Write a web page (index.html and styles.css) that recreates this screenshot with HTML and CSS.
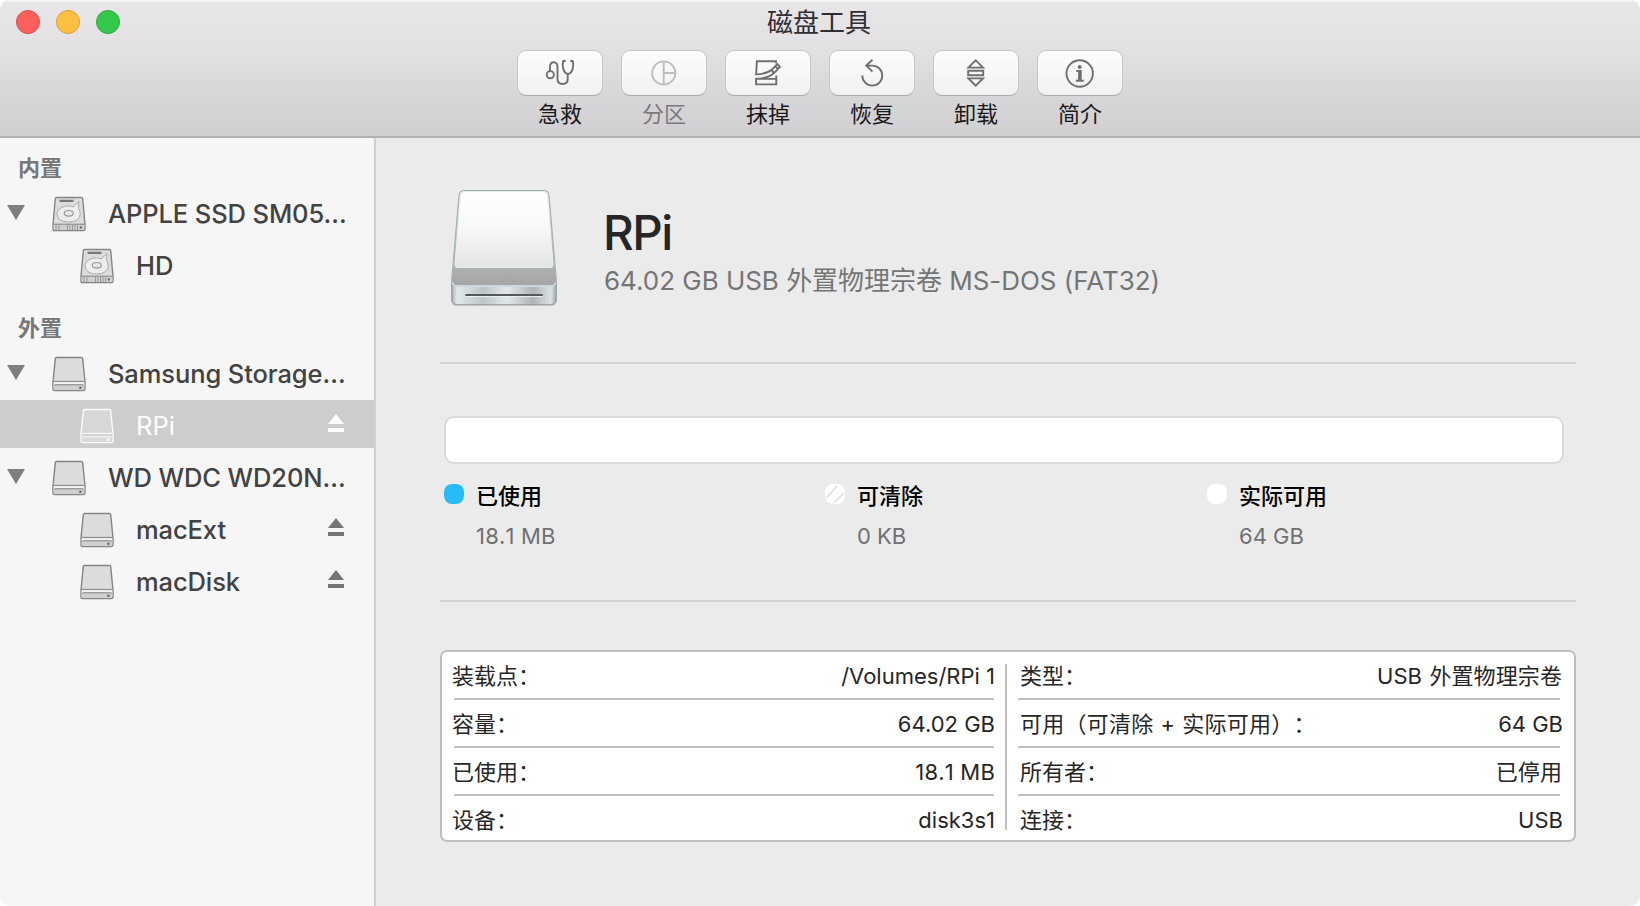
FILE: index.html
```html
<!DOCTYPE html>
<html lang="zh-CN">
<head>
<meta charset="utf-8">
<title>磁盘工具</title>
<link rel="stylesheet" href="styles.css">
</head>
<body>
<svg class="defs" width="0" height="0">
  <defs>
    <symbol id="external" viewBox="0 0 34 36">
      <path class="disk-body" d="M4.600 1.500h24.800q1.100 0 1.300 1.200L33 26v6.600q0 2-1.800 2H2.800q-1.800 0-1.800-2V26L3.300 2.700q.2-1.200 1.300-1.200z"/>
      <path class="disk-front" d="M1.600 25.600h30.800V32.400q0 1.600-1.600 1.600H3.200q-1.600 0-1.600-1.600z"/>
      <path class="disk-shine" d="M2 27.200h30"/>
      <path class="disk-edge" d="M1.300 25.400h31.400M2.500 29.600q.2-.8 1-.8h27q.8 0 1 .8"/>
      <circle class="disk-led" cx="28.400" cy="31.800" r="1.300"/>
    </symbol>
    <symbol id="internal" viewBox="0 0 34 36">
      <path class="disk-body" d="M4.600 1.500h24.800q1.100 0 1.300 1.200L33 28.500v4.600q0 1.500-1.500 1.500H2.500Q1 34.600 1 33.100v-4.600L3.300 2.700q.2-1.200 1.300-1.200z"/>
      <path class="disk-vent" d="M7.500 4.800h14"/>
      <path class="disk-platter" d="M26.800 5.500l-5.500 5.500Q17.500 9 12.500 10.300 5.500 12.300 5 17.500 5.200 25.800 16.500 26 28 25.800 28.300 18 28 14.500 26.500 12.500z"/>
      <ellipse class="disk-hub" cx="16.800" cy="17.300" rx="4.500" ry="2.800"/>
      <path class="disk-front" d="M1.600 28.200h30.800v4.800q0 1.100-1.200 1.100h-28.400q-1.200 0-1.200-1.100z"/>
      <path class="disk-edge" d="M1.300 28.200h31.400"/>
      <path class="disk-grill" d="M4 29v5M7 29v5M15.500 29v5M18 29v5M20.500 29v5M23 29v5M25.500 29v5"/>
      <circle class="disk-led" cx="28.800" cy="31.500" r="1.200"/>
    </symbol>
    <symbol id="eject" viewBox="0 0 16 18">
      <path d="M8 0l8 10H0zM0 14h16v4H0z"/>
    </symbol>
  </defs>
</svg>
<div class="window">
  <header class="header">
    <div class="titlebar">
      <div class="lights">
        <span class="light light-close"></span>
        <span class="light light-min"></span>
        <span class="light light-zoom"></span>
      </div>
      <h1 class="title">磁盘工具</h1>
    </div>
    <nav class="toolbar">
      <div class="tool">
        <button class="tool-button"><svg class="glyph" viewBox="0 0 86 46"><circle cx="33.300" cy="24.700" r="3.600"/><path d="M33 21v-4q0-4.700 3.800-4.700t3.700 4.700V29q0 5 5.100 5t5.100-5v-5M48.700 11h-2.500q-1.200 4.500.1 8.100Q48 23.700 51 24q3-.3 4.600-4.900 1.300-3.600.1-8.100h-2.500"/></svg></button>
        <span class="tool-label">急救</span>
      </div>
      <div class="tool tool-disabled">
        <button class="tool-button" disabled><svg class="glyph" viewBox="0 0 86 46"><circle cx="42.700" cy="23" r="11.600"/><path d="M42.700 11.400v23.200M42.700 23h11.600"/></svg></button>
        <span class="tool-label">分区</span>
      </div>
      <div class="tool">
        <button class="tool-button"><svg class="glyph" viewBox="0 0 86 46"><path d="M51 13.200v-1.900H31.900L31.100 24.400Q42 24 47.300 19.200L52.300 14.100 55 16.800 49.400 22.700Q46.900 22.200 47.300 19.200M50.200 16.200l2.700 2.700M49.400 22.700Q44 28.300 31.100 28.800V34.400H51.300V25.500M31.100 28.900H51.300"/></svg></button>
        <span class="tool-label">抹掉</span>
      </div>
      <div class="tool">
        <button class="tool-button"><svg class="glyph" viewBox="0 0 86 46"><path d="M33.300 25.600a10 10 0 1 0 10-10h-6M43.500 9.800l-6.200 5.800 6.200 6"/></svg></button>
        <span class="tool-label">恢复</span>
      </div>
      <div class="tool">
        <button class="tool-button"><svg class="glyph" viewBox="0 0 86 46"><path d="M42.700 10.300l7.300 7.300H35.400zM35.200 20.800h15v4.400h-15zM35.400 28.400H50l-7.300 7.300z"/></svg></button>
        <span class="tool-label">卸载</span>
      </div>
      <div class="tool">
        <button class="tool-button"><svg class="glyph" viewBox="0 0 86 46"><circle cx="42.700" cy="23.500" r="13.200"/><circle class="glyph-fill" cx="42.700" cy="17" r="2"/><path class="glyph-bold" d="M42.900 20.200v10.500"/><path d="M39.300 21h5M38.900 30.700h7.900"/></svg></button>
        <span class="tool-label">简介</span>
      </div>
    </nav>
  </header>
  <div class="body">
    <aside class="sidebar">
      <h2 class="group">内置</h2>
      <div class="row">
        <svg class="arrow" viewBox="0 0 18 15"><path d="M0 0h18L9 15z"/></svg>
        <svg class="disk"><use href="#internal"/></svg>
        <span class="row-name">APPLE SSD SM05…</span>
      </div>
      <div class="row row-child">
        <svg class="disk"><use href="#internal"/></svg>
        <span class="row-name">HD</span>
      </div>
      <h2 class="group group-next">外置</h2>
      <div class="row">
        <svg class="arrow" viewBox="0 0 18 15"><path d="M0 0h18L9 15z"/></svg>
        <svg class="disk"><use href="#external"/></svg>
        <span class="row-name">Samsung Storage…</span>
      </div>
      <div class="row row-child row-selected">
        <svg class="disk"><use href="#external"/></svg>
        <span class="row-name">RPi</span>
        <svg class="eject"><use href="#eject"/></svg>
      </div>
      <div class="row">
        <svg class="arrow" viewBox="0 0 18 15"><path d="M0 0h18L9 15z"/></svg>
        <svg class="disk"><use href="#external"/></svg>
        <span class="row-name">WD WDC WD20N…</span>
      </div>
      <div class="row row-child">
        <svg class="disk"><use href="#external"/></svg>
        <span class="row-name">macExt</span>
        <svg class="eject"><use href="#eject"/></svg>
      </div>
      <div class="row row-child">
        <svg class="disk"><use href="#external"/></svg>
        <span class="row-name">macDisk</span>
        <svg class="eject"><use href="#eject"/></svg>
      </div>
    </aside>
    <main class="main">
      <section class="summary">
        <svg class="drive" viewBox="0 0 112 122">
          <defs>
            <linearGradient id="face" x1="0" y1="0" x2="0" y2="1"><stop offset="0" stop-color="#fff"/><stop offset=".45" stop-color="#f9f9f9"/><stop offset="1" stop-color="#e4e4e4"/></linearGradient>
            <linearGradient id="shell" x1="0" y1="0" x2="0" y2="1"><stop offset="0" stop-color="#d5dcdd"/><stop offset=".6" stop-color="#b4b8b9"/><stop offset=".8" stop-color="#a6a7a7"/><stop offset="1" stop-color="#a0a1a1"/></linearGradient>
            <linearGradient id="front" x1="0" y1="0" x2="1" y2="0"><stop offset="0" stop-color="#aeb6b9"/><stop offset=".05" stop-color="#e2e8ea"/><stop offset=".3" stop-color="#bcc6c9"/><stop offset=".53" stop-color="#e3e9eb"/><stop offset=".78" stop-color="#b0b4b6"/><stop offset=".95" stop-color="#dce3e5"/><stop offset="1" stop-color="#a4abae"/></linearGradient>
          </defs>
          <path class="drive-shadow" d="M3.500 100h105v13q0 5-5 5h-95q-5 0-5-5z"/>
          <path d="M15.500 2.500h81q4 0 4.500 4L108.500 94v17q0 5.500-5.500 5.500H9q-5.500 0-5.500-5.500V94L11 6.500q.5-4 4.500-4z" fill="url(#shell)" stroke="#a5adaf"/>
          <path d="M15.800 3.800h80.400q3 0 3.300 3L105 76.500q.2 3-2.500 3h-93q-2.700 0-2.500-3L12.500 6.800q.3-3 3.300-3z" fill="url(#face)" stroke="#e2f2f3"/>
          <path d="M4 96q1 2.300 5 2.300h94q4 0 5-2.300v15q0 5.500-5.500 5.500h-93Q4 116.500 4 111z" fill="url(#front)" stroke="#969c9e" stroke-width=".8"/>
          <path d="M4.500 94.500q.3 3.500 4.500 3.500h94q4.200 0 4.500-3.500" fill="none" stroke="#dce8ea" stroke-width="1.400"/>
          <path d="M17.300 107h77.400" stroke="#55595b" stroke-width="1.800"/><path d="M17.300 108.600h77.400" stroke="#edf3f5"/>
        </svg>
        <div class="summary-text">
          <h2 class="drive-name">RPi</h2>
          <p class="drive-info">64.02 GB USB 外置物理宗卷 MS-DOS (FAT32)</p>
        </div>
      </section>
      <section class="usage">
        <div class="usage-bar"></div>
        <div class="legend">
          <div class="legend-item"><svg class="dot" viewBox="0 0 20 20"><rect width="20" height="20" rx="8" fill="#29bbf8"/></svg><div><p class="legend-name">已使用</p><p class="legend-value loose">18.1 MB</p></div></div>
          <div class="legend-item"><svg class="dot" viewBox="0 0 20 20"><rect width="20" height="20" rx="8" fill="#fff"/><path d="M1.500 13.500l11-12M9 19L19 9" stroke="#dedede" stroke-width="1.700"/></svg><div><p class="legend-name">可清除</p><p class="legend-value">0 KB</p></div></div>
          <div class="legend-item"><svg class="dot" viewBox="0 0 20 20"><rect width="20" height="20" rx="8" fill="#fff"/></svg><div><p class="legend-name">实际可用</p><p class="legend-value">64 GB</p></div></div>
        </div>
      </section>
      <section class="details">
        <dl class="facts facts-left">
          <div class="fact"><dt>装载点：</dt><dd>/Volumes/RPi 1</dd></div>
          <div class="fact"><dt>容量：</dt><dd>64.02 GB</dd></div>
          <div class="fact"><dt>已使用：</dt><dd class="loose">18.1 MB</dd></div>
          <div class="fact"><dt>设备：</dt><dd>disk3s1</dd></div>
        </dl>
        <div class="divider"></div>
        <dl class="facts facts-right">
          <div class="fact"><dt>类型：</dt><dd class="cjk-value">USB 外置物理宗卷</dd></div>
          <div class="fact"><dt class="available">可用（可清除 + 实际可用）：</dt><dd>64 GB</dd></div>
          <div class="fact"><dt>所有者：</dt><dd class="cjk-value">已停用</dd></div>
          <div class="fact"><dt>连接：</dt><dd>USB</dd></div>
        </dl>
      </section>
    </main>
  </div>
</div>
</body>
</html>
```
FILE: styles.css
```css
* { box-sizing: border-box; margin: 0; padding: 0; }

body {
  background: #fff;
  font-family: Inter, "Noto Sans CJK SC", sans-serif;
  font-size: 22px;
  color: #262626;
}

.defs { display: block; height: 0; }

.window {
  display: flex;
  flex-direction: column;
  width: 1640px;
  height: 906px;
  border-radius: 10px;
  overflow: hidden;
  background: #ebebeb;
}

/* Title bar and toolbar */
.header {
  height: 138px;
  background: linear-gradient(#e8e6e9, #e2e0e3 40%, #d8d7d9 64%, #d1cfd2);
  border-bottom: 2px solid #b3b1b4;
  box-shadow: inset 0 2px 0 #f4f3f5;
}
.titlebar {
  display: grid;
  grid-template-columns: 1fr auto 1fr;
  align-items: center;
  height: 50px;
  padding: 0 18px 6px 16px;
}
.lights { display: flex; gap: 16px; }
.light { width: 24px; height: 24px; border-radius: 50%; border: 1px solid; }
.light-close { background: #fc605c; border-color: #df4744; }
.light-min { background: #fdbf41; border-color: #de9f34; }
.light-zoom { background: #34c84a; border-color: #27aa35; }
.title { padding-top: 2px; font-size: 26px; line-height: 38px; font-weight: 400; color: #302e31; }

.toolbar { display: flex; justify-content: center; gap: 18px; }
.tool { display: flex; flex-direction: column; align-items: center; }
.tool-button {
  display: block;
  width: 86px;
  height: 46px;
  border: 1px solid #c6c4c7;
  border-bottom-color: #aaa8ab;
  border-radius: 9px;
  background: linear-gradient(#fdfdfd, #f1f1f1);
}
.tool-label { line-height: 34px; margin-top: 1px; color: #1a191b; }
.tool-disabled .tool-label { color: #7c7a7d; }
.glyph {
  display: block;
  width: 86px;
  height: 46px;
  margin: -1px;
  fill: none;
  stroke: #6f6f6f;
  stroke-width: 1.9;
}
.tool-disabled .glyph { stroke: #bdbdbd; }
.glyph .glyph-fill { fill: #6f6f6f; stroke: none; }
.glyph .glyph-bold { stroke-width: 3.6; }

.body { display: flex; flex: 1; }

/* Sidebar */
.sidebar {
  width: 376px;
  border-right: 2px solid #d1d1d1;
  background: #f6f6f6;
}
.group {
  height: 50px;
  padding: 14px 0 0 18px;
  font-size: 22px;
  line-height: 32px;
  font-weight: 700;
  color: #777;
}
.group-next { margin-top: 12px; height: 48px; padding-top: 12px; }
.row {
  display: flex;
  align-items: center;
  height: 48px;
  margin-bottom: 4px;
  padding: 4px 30px 0 7px;
}
.row-child { padding-left: 80px; }
.arrow { flex: none; width: 18px; height: 15px; margin: 0 27px 3px 0; fill: #7f7f7f; }
.disk { flex: none; width: 34px; height: 36px; }
.row-name {
  flex: 1;
  min-width: 0;
  margin-left: 22px;
  font-size: 25.5px;
  font-weight: 450;
  letter-spacing: -.1px;
  line-height: 32px;
  white-space: nowrap;
  color: #424242;
}
.eject { flex: none; width: 16px; height: 18px; margin-bottom: 6px; fill: #757575; }
.row-selected { background: #cdcdcd; }
.row-selected .row-name { color: #fff; font-weight: 400; letter-spacing: 0; }
.row-selected .eject { fill: #fff; }

.disk {
  --disk-fill: #dcdcdc;
  --disk-front: #d0d0d0;
  --disk-line: #858585;
  --disk-shine: #f3f3f3;
  --disk-led: #6c6c6c;
}
.row-selected .disk {
  --disk-fill: #d7d7d7;
  --disk-front: #d9d9d9;
  --disk-line: #fbfbfb;
  --disk-shine: #d2d2d2;
  --disk-led: #fff;
}
.disk-body { fill: var(--disk-fill); stroke: var(--disk-line); stroke-width: 1.4; }
.disk-front { fill: var(--disk-front); }
.disk-edge { fill: none; stroke: var(--disk-line); stroke-width: 1; }
.disk-shine { stroke: var(--disk-shine); stroke-width: 2; }
.disk-led { fill: var(--disk-led); }
.disk-vent { stroke: #777; stroke-width: 2.2; }
.disk-platter { fill: #ededed; stroke: #aaa; stroke-width: 1; }
.disk-hub { fill: #e8e8e8; stroke: #999; stroke-width: 1.2; }
.disk-grill { stroke: #999; stroke-width: 1; }

/* Volume summary */
.main { flex: 1; padding: 0 64px; }
.summary {
  display: flex;
  height: 226px;
  padding: 50px 0 0 8px;
  border-bottom: 2px solid #d3d3d3;
}
.drive { width: 112px; height: 122px; }
.drive-shadow { fill: #c4c4c4; }
.summary-text { margin-left: 44px; }
.drive-name {
  padding-top: 15px;
  margin-left: -1px;
  font-size: 47.5px;
  line-height: 60px;
  font-weight: 450;
  letter-spacing: -1.5px;
  color: #262626;
}
.drive-info { margin-top: -1px; font-size: 26px; line-height: 38px; letter-spacing: -.03px; color: #757575; white-space: nowrap; }

/* Usage */
.usage { height: 238px; padding-top: 52px; border-bottom: 2px solid #d3d3d3; }
.usage-bar {
  height: 48px;
  margin: 0 12px 0 4px;
  border: 2px solid #d9d9d9;
  border-radius: 10px;
  background: #fff;
}
.legend { display: grid; grid-template-columns: 381px 382px 1fr; padding: 14px 0 0 4px; }
.legend-item { display: flex; gap: 12px; }
.dot { width: 20px; height: 20px; margin-top: 6px; }
.legend-name { line-height: 36px; font-weight: 500; color: #000; }
.legend-value { line-height: 32px; margin-top: 6px; color: #707070; }
.loose { font-kerning: none; letter-spacing: .2px; }

/* Details */
.details {
  display: flex;
  height: 192px;
  margin-top: 48px;
  padding: 0 12px 0 12px;
  border: 2px solid #bfbfbf;
  border-radius: 7px;
  background: #fff;
}
.facts-left { width: 540px; }
.facts-right { width: 542px; }
.divider { width: 2px; height: 166px; margin: 12px 11px 0; background: #bfbfbf; }
.fact {
  display: flex;
  justify-content: space-between;
  height: 48px;
  border-bottom: 2px solid #bfbfbf;
  line-height: 48px;
  white-space: nowrap;
}
.fact:last-child { border-bottom: 0; }
.fact dt { text-spacing-trim: space-all; }
.facts-left dt { margin-left: -2px; }
.facts-right dt { margin-left: 2px; }
.facts-left dd { margin-right: -1px; }
.facts-right dd { margin-right: -3px; }
.facts-right .cjk-value { margin-right: -2px; word-spacing: 1px; letter-spacing: .1px; }
.available { letter-spacing: .25px; word-spacing: .5px; }
```
